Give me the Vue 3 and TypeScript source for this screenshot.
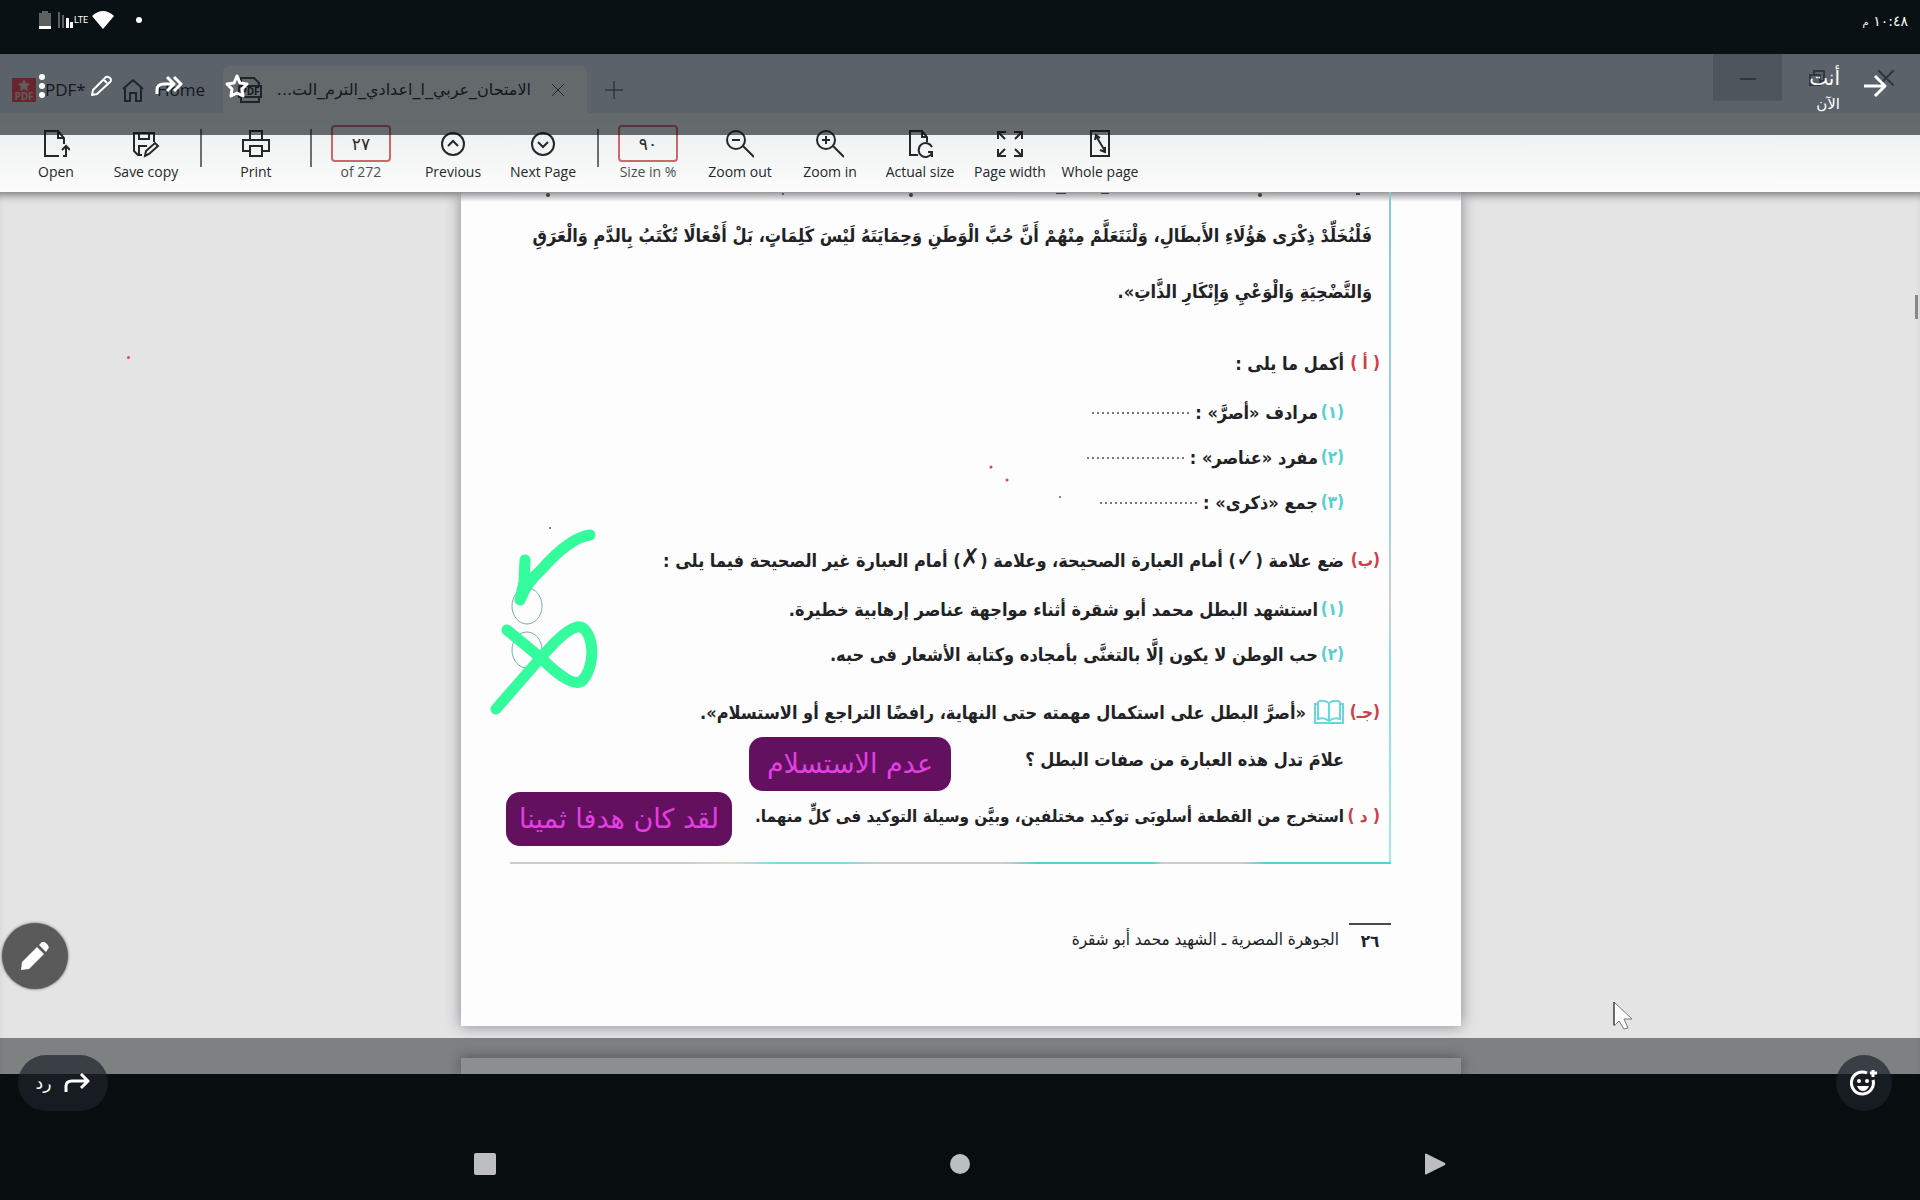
<script setup lang="ts">
import { ref } from 'vue'

interface Tool {
  label: string
  paths: string[]
}

const open: Tool = {
  label: 'Open',
  paths: ['M17 26H3V1h13l6 7v6', 'M16 1v7h6', 'M24 27v-10M20 20l4-4 4 4M21 26h3'],
}
const save: Tool = {
  label: 'Save copy',
  paths: ['M10 25H6l-4-4V3h20v9', 'M7 3v6h10V3M7 25v-9h8', 'M13 26l1-5 9-8 3 3-9 8z'],
}
const print: Tool = {
  label: 'Print',
  paths: ['M8 10V1h12v9', 'M7 21H1V10h26v11h-6', 'M8 16h12v10H8z'],
}
const previous: Tool = { label: 'Previous', paths: ['M14 3a11 11 0 1 0 0 22a11 11 0 1 0 0-22', 'M9 16l5-5 5 5'] }
const next: Tool = { label: 'Next Page', paths: ['M14 3a11 11 0 1 0 0 22a11 11 0 1 0 0-22', 'M9 12l5 5 5-5'] }
const viewTools: Tool[] = [
  { label: 'Zoom out', paths: ['M10 1a9 9 0 1 0 0 18a9 9 0 1 0 0-18', 'M17 16l11 11M6 10h8'] },
  { label: 'Zoom in', paths: ['M10 1a9 9 0 1 0 0 18a9 9 0 1 0 0-18', 'M17 16l11 11M6 10h8M10 6v8'] },
  { label: 'Actual size', paths: ['M12 25H4V1h12l5 6v5', 'M16 1v6h5', 'M26 17a7 7 0 1 0 0 6M26 27v-5h-4'] },
  { label: 'Page width', paths: ['M2 9V2h8M2 2l7 7', 'M26 9V2h-8M26 2l-7 7', 'M2 19v7h8M2 26l7-7', 'M26 19v7h-8M26 26l-7-7'] },
  { label: 'Whole page', paths: ['M5 1h18v25H5z', 'M10 6l9 15M9 10l1-5 4 3M19 17v5l-5-2'] },
]

const pageNumber = ref('٢٧')
const zoomLevel = ref('٩٠')

const blanks = [
  { mark: '(١)', text: 'مرادف «أصرَّ» :' },
  { mark: '(٢)', text: 'مفرد «عناصر» :' },
  { mark: '(٣)', text: 'جمع «ذكرى» :' },
]
const statements = [
  { mark: '(١)', text: 'استشهد البطل محمد أبو شقرة أثناء مواجهة عناصر إرهابية خطيرة.' },
  { mark: '(٢)', text: 'حب الوطن لا يكون إلَّا بالتغنَّى بأمجاده وكتابة الأشعار فى حبه.' },
]
</script>

<template>
  <div class="viewer">
    <header class="status">
      <div class="status-icons">
        <svg width="12" height="18" viewBox="0 0 12 18"><path d="M3 0h6v2h3v16H0V2h3z" fill="#5d6163" /><path d="M0 15h12v3H0z" fill="#fff" /></svg>
        <div class="signal">
          <svg width="16" height="18" viewBox="0 0 16 18"><path d="M0 1h2v16H0zM4 4h2v13H4z" fill="#5d6163" /><path d="M8 7h3v10H8zM12 11h3v6h-3z" fill="#fff" /></svg>
          <span>LTE</span>
        </div>
        <svg width="22" height="18" viewBox="0 0 22 18"><path d="M0 5Q11-5 22 5L11 18z" fill="#fff" /></svg>
        <i class="dot"></i>
      </div>
      <time class="clock" dir="rtl">١٠:٤٨ <small>م</small></time>
    </header>

    <main class="stage">
      <div class="tabs">
        <div class="brand">
          <svg width="24" height="24" viewBox="0 0 24 24"><path d="M0 0h24v24H0z" fill="#f04a52" /><path d="M12 1l2 4 4 1-3 3 1 4-4-2-4 2 1-4-3-3 4-1z" fill="#f0c8cc" /><text x="12" y="22" text-anchor="middle" font-size="10" font-weight="700" fill="#f0c8cc" font-family="Open Sans, sans-serif">PDF</text></svg>
          <span>PDF*</span>
        </div>
        <button class="tab home">
          <svg class="line" width="22" height="24" viewBox="0 0 22 24"><path d="M1 11L11 2l10 9M3 10v13h5v-8h6v8h5V10" /></svg>
          Home
        </button>
        <button class="tab active">
          <svg class="line" width="26" height="28" viewBox="0 0 26 28"><path d="M4 10V2h13l5 5v3M2 10h22v11H2zM4 21v5h18v-5" /><text x="13" y="19" text-anchor="middle" font-size="10" font-weight="700" font-family="Open Sans, sans-serif" class="glyph">PDF</text></svg>
          <span class="tab-title" dir="rtl">الامتحان_عربي_ا_اعدادي_الترم_الت...</span>
          <svg class="line thin" width="14" height="14" viewBox="0 0 14 14"><path d="M1 1l12 12M13 1L1 13" /></svg>
        </button>
        <button class="add" aria-label="New tab"><svg class="line thin" width="18" height="18" viewBox="0 0 18 18"><path d="M9 0v18M0 9h18" /></svg></button>
        <div class="window-controls">
          <button class="minimise" aria-label="Minimise"><svg class="line" width="16" height="16" viewBox="0 0 16 16"><path d="M0 9h16" /></svg></button>
          <button aria-label="Restore"><svg class="line" width="16" height="16" viewBox="0 0 16 16"><path d="M1 5h10v10H1zM5 5V1h10v10h-4" /></svg></button>
          <button aria-label="Close"><svg class="line" width="16" height="16" viewBox="0 0 16 16"><path d="M0 0l16 16M16 0L0 16" /></svg></button>
        </div>
      </div>

      <div class="toolbar">
        <button v-for="t in [open, save]" :key="t.label" class="tool">
          <svg class="line" width="28" height="28" viewBox="0 0 28 28"><path v-for="p in t.paths" :key="p" :d="p" /></svg>
          {{ t.label }}
        </button>
        <i class="sep"></i>
        <button class="tool">
          <svg class="line" width="28" height="28" viewBox="0 0 28 28"><path v-for="p in print.paths" :key="p" :d="p" /></svg>
          {{ print.label }}
        </button>
        <i class="sep"></i>
        <div class="field">
          <input id="page-number" v-model="pageNumber" type="text" />
          <label for="page-number">of 272</label>
        </div>
        <button v-for="t in [previous, next]" :key="t.label" class="tool">
          <svg class="line" width="28" height="28" viewBox="0 0 28 28"><path v-for="p in t.paths" :key="p" :d="p" /></svg>
          {{ t.label }}
        </button>
        <i class="sep"></i>
        <div class="field">
          <input id="zoom-level" v-model="zoomLevel" type="text" />
          <label for="zoom-level">Size in %</label>
        </div>
        <button v-for="t in viewTools" :key="t.label" class="tool">
          <svg class="line" width="28" height="28" viewBox="0 0 28 28"><path v-for="p in t.paths" :key="p" :d="p" /></svg>
          {{ t.label }}
        </button>
      </div>

      <div class="desk">
        <article class="sheet" dir="rtl">
          <section class="frame">
            <p class="passage">
              فَلْنُخَلِّدْ ذِكْرَى هَؤُلَاءِ الأَبطَالِ، وَلْنَتَعَلَّمْ مِنْهُمْ أَنَّ حُبَّ الْوَطَنِ وَحِمَايَتَهُ لَيْسَ كَلِمَاتٍ، بَلْ أَفْعَالًا تُكْتَبُ بِالدَّمِ وَالْعَرَقِ<br />
              وَالتَّضْحِيَةِ وَالْوَعْيِ وَإِنْكَارِ الذَّاتِ».
            </p>

            <h2 class="row head"><span class="letter">( أ )</span>أكمل ما يلى :</h2>
            <div v-for="b in blanks" :key="b.text" class="row item">
              <span class="number">{{ b.mark }}</span>{{ b.text }}<i class="blank"></i>
            </div>

            <h2 class="row head"><span class="letter">(ب)</span><span>ضع علامة (<b class="mark">✓</b>) أمام العبارة الصحيحة، وعلامة (<b class="mark">✗</b>) أمام العبارة غير الصحيحة فيما يلى :</span></h2>
            <div v-for="s in statements" :key="s.text" class="row item">
              <span class="number">{{ s.mark }}</span>{{ s.text }}
            </div>

            <div class="row head">
              <span class="letter">(جـ)</span>
              <svg class="book" width="30" height="26" viewBox="0 0 30 26"><path d="M15 4Q9 0 4 3v17q6-2 11 2q5-4 11-2V3q-5-3-11 1zM15 4v18M4 5H1v19h28V5h-3" /></svg>
              «أصرَّ البطل على استكمال مهمته حتى النهاية، رافضًا التراجع أو الاستسلام».
            </div>
            <div class="row item question">علامَ تدل هذه العبارة من صفات البطل ؟</div>

            <div class="row head extract"><span class="letter">( د )</span>استخرج من القطعة أسلوبَى توكيد مختلفين، وبيَّن وسيلة التوكيد فى كلٍّ منهما.</div>
          </section>

          <footer class="sheet-foot">
            <span class="folio">٢٦</span>
            <span>الجوهرة المصرية ـ الشهيد محمد أبو شقرة</span>
          </footer>

          <svg class="ink" viewBox="0 0 1000 834" width="1000" height="834">
            <g fill="none" stroke="#7fa9b5" stroke-width="1"><ellipse cx="66" cy="414" rx="15" ry="18" /><ellipse cx="66" cy="458" rx="15" ry="18" /></g>
            <g fill="none" stroke="#34fb9b" stroke-width="11" stroke-linecap="round" stroke-linejoin="round">
              <path d="M64 368L63 390L59 408Q66 390 80 378Q108 346 129 343" />
              <path d="M46 438L80 466Q112 498 122 488C138 468 130 432 116 435C104 438 90 454 76 470L35 517" />
            </g>
            <g fill="#d8455c"><circle cx="530" cy="275" r="1.5" /><circle cx="546" cy="288" r="1.5" /></g>
            <g fill="#6b5560"><circle cx="599" cy="305" r="1" /><circle cx="89" cy="336" r="1" /></g>
            <g fill="#3c3c40"><circle cx="87" cy="3" r="2" /><circle cx="322" cy="2" r="1" /><circle cx="450" cy="3" r="2" /><circle cx="799" cy="3" r="2" /><path d="M595 1h10v1h-10zM640 1h8v1h-8zM895 1h4v2h-4z" /></g>
          </svg>
          <div class="answer first">عدم الاستسلام</div>
          <div class="answer second">لقد كان هدفا ثمينا</div>
        </article>
        <div class="sheet-next"></div>
        <i class="speck"></i>
        <i class="scroll-thumb"></i>
        <button class="draw" aria-label="تحرير">
          <svg width="28" height="28" viewBox="0 0 28 28" fill="#fff"><path d="M0 28l1-8L16 5l7 7L8 27zM18 3l3-3q2-1 5 2t1 5l-2 3z" /></svg>
        </button>
        <svg class="cursor" width="20" height="30" viewBox="0 0 20 30"><path d="M1 1v24l5-5 5 8 4-1-4-9h8z" fill="#fff" stroke="#777" stroke-width="1" /><path d="M1 1v23" stroke="#222" stroke-width="1" /></svg>
      </div>

      <div class="veil top" dir="rtl">
        <button class="icon" aria-label="رجوع"><svg class="white" width="24" height="24" viewBox="0 0 24 24"><path d="M1 12h21M12 2l10 10-10 10" /></svg></button>
        <div class="who"><strong>أنت</strong><span>الآن</span></div>
        <div class="actions">
          <button class="icon" aria-label="نجمة"><svg class="white" width="26" height="26" viewBox="0 0 26 26"><path d="M13 3l3 7 7 1-5 5 1 7-6-3-6 3 1-7-5-5 7-1z" /></svg></button>
          <button class="icon" aria-label="إعادة توجيه"><svg class="white" width="28" height="24" viewBox="0 0 28 24"><path d="M2 20v-4q0-6 7-6h9M12 3l7 7-7 7M19 3l7 7-7 7" /></svg></button>
          <button class="icon" aria-label="تعديل"><svg class="white slim" width="22" height="22" viewBox="0 0 22 22"><path d="M2 20l1-5L16 2q2-1 4 1t0 4L7 19zM14 5l3 3" /></svg></button>
          <button class="icon" aria-label="المزيد"><svg width="6" height="24" viewBox="0 0 6 24" fill="#fff"><circle cx="3" cy="3" r="3" /><circle cx="3" cy="12" r="3" /><circle cx="3" cy="21" r="3" /></svg></button>
        </div>
      </div>
      <div class="veil bottom"></div>
    </main>

    <footer class="base">
      <div class="replies">
        <button class="reply"><span>رد</span><svg class="white" width="26" height="22" viewBox="0 0 26 22"><path d="M2 20v-6q0-5 6-5h16M17 2l7 7-7 7" /></svg></button>
        <button class="react" aria-label="تفاعل"><svg width="28" height="28" viewBox="0 0 28 28"><path d="M17 4A11 11 0 1 0 23 11" fill="none" stroke="#fff" stroke-width="3" /><circle cx="9" cy="12" r="2" fill="#fff" /><circle cx="17" cy="12" r="2" fill="#fff" /><path d="M7 17h12q-2 5-6 5t-6-5z" fill="#fff" /><path d="M23 1v7M20 4h7" stroke="#fff" stroke-width="3" /></svg></button>
      </div>
      <nav class="system">
        <button aria-label="التطبيقات الأخيرة"><svg width="22" height="22" viewBox="0 0 22 22"><rect width="22" height="22" rx="2" /></svg></button>
        <button aria-label="الرئيسية"><svg width="22" height="22" viewBox="0 0 22 22"><circle cx="11" cy="11" r="10" /></svg></button>
        <button aria-label="رجوع"><svg width="22" height="22" viewBox="0 0 22 22"><path d="M1 1q0-1 2 0l18 9q1 1 0 2L3 21q-2 1-2 0z" /></svg></button>
      </nav>
    </footer>
  </div>
</template>

<style>
body {
  margin: 0;
  background: #080d10;
}
</style>

<style scoped>
.viewer {
  display: flex;
  flex-direction: column;
  min-height: 100vh;
  background: #080d10;
  font-family: "DejaVu Sans", sans-serif;
  color: #fff;
}
button {
  margin: 0;
  padding: 0;
  border: 0;
  background: none;
  color: inherit;
  font: inherit;
}
svg {
  display: block;
}
.line {
  fill: none;
  stroke: #25282b;
  stroke-width: 2;
}
.thin {
  stroke-width: 1;
}
.glyph {
  fill: #25282b;
  stroke: none;
}
.white {
  fill: none;
  stroke: #fff;
  stroke-width: 3;
  stroke-linejoin: round;
}
.slim {
  stroke-width: 2;
}

/* phone status bar */
.status {
  display: flex;
  justify-content: space-between;
  height: 54px;
  padding: 0 12px 0 39px;
  background: #0a1114;
}
.status-icons {
  display: flex;
  align-items: center;
  height: 40px;
}
.signal {
  display: flex;
  align-items: center;
  margin: 0 4px 0 7px;
  font: 9px/18px "Roboto", sans-serif;
}
.dot {
  width: 6px;
  height: 6px;
  margin-left: 22px;
  border-radius: 50%;
  background: #fff;
}
.clock {
  font-size: 14px;
  line-height: 42px;
}
.clock small {
  font-size: 10px;
}

/* shared PDF window */
.stage {
  position: relative;
  display: flex;
  flex: 1;
  flex-direction: column;
  background: #e4e4e5;
  color: #25282b;
}
.tabs {
  display: flex;
  height: 59px;
  background: #d7dbe9;
  font: 17px/24px "Open Sans", sans-serif;
}
.tabs .line {
  stroke: #3d4146;
}
.brand {
  display: flex;
  align-items: center;
  width: 111px;
  padding: 12px 0 0 12px;
  gap: 9px;
  box-sizing: border-box;
}
.tab {
  display: flex;
  align-items: center;
}
.home {
  width: 112px;
  padding: 12px 0 0 11px;
  gap: 13px;
}
.active {
  width: 364px;
  margin-top: 12px;
  padding: 0 22px 0 14px;
  border-radius: 6px 6px 0 0;
  background: #eaeeee;
}
.tab-title {
  margin: 0 20px 0 auto;
  font: 16px/24px "DejaVu Sans", sans-serif;
}
.add {
  padding: 12px 0 0 18px;
}
.window-controls {
  display: flex;
  height: 47px;
  margin-left: auto;
}
.window-controls button {
  display: grid;
  place-items: center;
  width: 69px;
}
.window-controls .line {
  stroke: #6d7279;
}
.window-controls .minimise {
  background: #b7bccb;
}
.toolbar {
  display: flex;
  height: 79px;
  padding: 12px 11px 0;
  box-sizing: border-box;
  background: linear-gradient(#eaeeee, #fcfcfc);
  font: 14px/20px "Open Sans", sans-serif;
}
.tool {
  display: flex;
  flex-direction: column;
  align-items: center;
  width: 90px;
  height: 60px;
  padding-top: 5px;
  gap: 4px;
  box-sizing: border-box;
  white-space: nowrap;
}
.sep {
  width: 2px;
  height: 38px;
  margin: 4px 9px 0;
  background: #6c6e70;
}
.field {
  display: flex;
  flex-direction: column;
  align-items: center;
  width: 80px;
  margin-right: 7px;
  color: #4c4f52;
}
.field input {
  width: 60px;
  height: 37px;
  box-sizing: border-box;
  border: 2px solid #c9696c;
  border-radius: 4px;
  background: transparent;
  color: #25282b;
  text-align: center;
  font: 17px/20px "DejaVu Sans", sans-serif;
}

/* document */
.desk {
  position: relative;
  flex: 1;
  padding-left: 2px;
  overflow: hidden;
  box-shadow: inset 0 9px 8px -6px #77777c;
}
.sheet {
  position: relative;
  width: 1000px;
  max-width: 100%;
  margin: 0 auto;
  padding: 0 70px 69px 49px;
  box-sizing: border-box;
  background: linear-gradient(#98989c, #fdfdfd 10px);
  box-shadow: 0 0 14px #88888c;
  color: #222226;
}
.frame {
  position: relative;
  margin: 0;
  padding: 16px 11px 21px 0;
}
.frame::before {
  content: "";
  position: absolute;
  top: 0;
  right: 0;
  bottom: 0;
  width: 2px;
  background: linear-gradient(#86cbd3, #a5d5da 50%, #cfcfd4 62%, #8adfe2 70%, #a9e6e8);
}
.frame::after {
  content: "";
  position: absolute;
  right: 0;
  bottom: 0;
  left: 0;
  height: 2px;
  background: linear-gradient(90deg, #ccc 20%, #d8dcc8 25%, #7fdde0 30%, #7fdde0 38%, #ccc 42%, #ccc 56%, #55cfd0 60%, #55cfd0 73%, #ccc 74%, #ccc 83%, #55cfd0 86%);
}
.passage {
  margin: 0 8px 16px 0;
  font: 700 18px/56px "DejaVu Sans Condensed", "DejaVu Sans", sans-serif;
  white-space: nowrap;
}
.row {
  display: flex;
  align-items: center;
  margin: 0;
  font: 700 18px/45px "DejaVu Sans Condensed", "DejaVu Sans", sans-serif;
  white-space: nowrap;
}
.head {
  height: 54px;
  margin-top: 8px;
}
.passage + .head {
  margin-top: 0;
}
.item {
  margin-right: 36px;
}
.question {
  line-height: 42px;
}
.extract {
  font-size: 17px;
}
.letter {
  width: 36px;
  color: #c9414b;
  font-size: 17px;
}
.number {
  width: 26px;
  color: #55cfd0;
  font-size: 17px;
}
.mark {
  font-size: 26px;
  line-height: 24px;
}
.blank {
  width: 98px;
  height: 2px;
  margin-right: 5px;
  background: repeating-linear-gradient(90deg, #77777b 0 2px, transparent 2px 5px);
}
.book {
  margin-left: 8px;
  fill: none;
  stroke: #6bd6dc;
  stroke-width: 2;
}
.sheet-foot {
  display: flex;
  align-items: flex-start;
  margin-top: 59px;
  gap: 10px;
  font: 17px/32px "DejaVu Sans Condensed", "DejaVu Sans", sans-serif;
}
.folio {
  width: 42px;
  border-top: 2px solid #4a4a4e;
  text-align: center;
  font-weight: 700;
}
.ink {
  position: absolute;
  top: 0;
  left: 0;
}
.answer {
  position: absolute;
  height: 54px;
  border-radius: 14px;
  background: #63105f;
  color: #e33fe2;
  font-size: 27px;
  line-height: 54px;
  text-align: center;
  white-space: nowrap;
}
.first {
  top: 545px;
  left: 288px;
  width: 202px;
}
.second {
  top: 600px;
  left: 45px;
  width: 226px;
}
.sheet-next {
  width: 1000px;
  max-width: 100%;
  height: 16px;
  margin: 32px auto 0;
  background: #fff;
  box-shadow: 0 0 14px #88888c;
}
.speck {
  position: absolute;
  top: 164px;
  left: 127px;
  width: 3px;
  height: 3px;
  border-radius: 50%;
  background: #ee4455;
}
.scroll-thumb {
  position: absolute;
  top: 103px;
  right: 2px;
  width: 3px;
  height: 24px;
  background: #88888a;
}
.draw {
  position: absolute;
  bottom: 85px;
  left: 2px;
  display: grid;
  place-items: center;
  width: 66px;
  height: 66px;
  border-radius: 50%;
  background: #5a5a5a;
  box-shadow: 0 0 3px #5a5a5a;
}
.cursor {
  position: absolute;
  right: 287px;
  bottom: 43px;
}

/* story overlay */
.veil {
  position: absolute;
  right: 0;
  left: 0;
}
.veil.top {
  top: 0;
  display: flex;
  align-items: center;
  height: 81px;
  padding: 0 33px 18px 39px;
  box-sizing: border-box;
  background: rgba(10, 16, 20, 0.6);
  color: #fff;
}
.veil.bottom {
  bottom: 0;
  height: 36px;
  background: rgba(10, 16, 20, 0.47);
}
.who {
  display: flex;
  flex-direction: column;
  margin-right: 23px;
  padding-top: 10px;
  font-size: 15px;
  line-height: 25px;
}
.who strong {
  font-size: 20px;
  font-weight: 400;
  line-height: 28px;
}
.actions {
  display: flex;
  align-items: center;
  margin-right: auto;
}
.actions .icon:nth-child(2) {
  margin: 0 41px 0 43px;
}
.actions .icon:nth-child(3) {
  margin-left: 45px;
}

/* reply strip and system keys */
.base {
  display: flex;
  flex-direction: column;
  height: 126px;
}
.replies {
  position: relative;
  display: flex;
  justify-content: space-between;
  margin-top: -19px;
  padding: 0 28px 0 18px;
}
.reply {
  display: flex;
  align-items: center;
  justify-content: center;
  width: 90px;
  height: 56px;
  gap: 13px;
  border-radius: 28px;
  background: rgba(29, 35, 41, 0.7);
  font-size: 17px;
}
.react {
  display: grid;
  place-items: center;
  width: 56px;
  height: 56px;
  border-radius: 50%;
  background: rgba(29, 35, 41, 0.7);
}
.system {
  display: flex;
  justify-content: space-around;
  margin: 42px 247px 0;
  fill: #bcbec0;
}
</style>
